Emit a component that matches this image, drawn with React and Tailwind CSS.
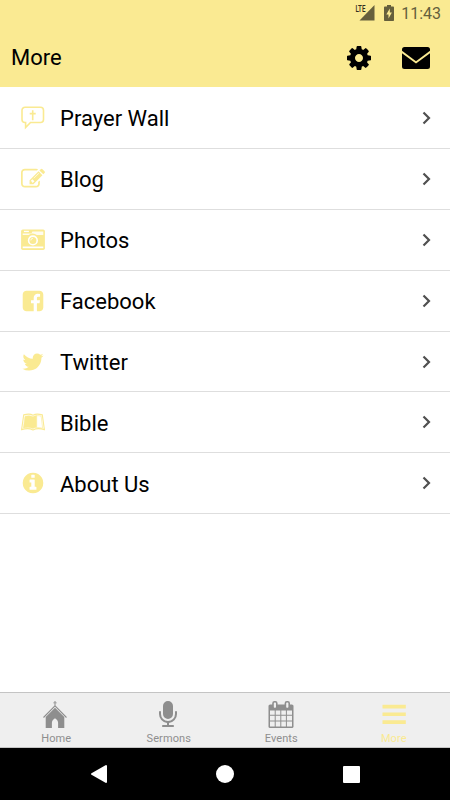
import React from "react";

const PATHS = {
  blog: "M888 1184l116-116-152-152-116 116v56h96v96h56zm440-720q-16-16-33 1l-350 350q-17 17-1 33t33-1l350-350q17-17 1-33zm80 594v190q0 119-84.5 203.5t-203.5 84.5h-832q-119 0-203.5-84.5t-84.5-203.5v-832q0-119 84.5-203.5t203.5-84.5h832q63 0 117 25 15 7 18 23 3 17-9 29l-49 49q-14 14-32 8-23-6-45-6h-832q-66 0-113 47t-47 113v832q0 66 47 113t113 47h832q66 0 113-47t47-113v-126q0-13 9-22l64-64q15-15 35-7t20 29zm-96-738l288 288-672 672h-288v-288zm444 132l-92 92-288-288 92-92q28-28 68-28t68 28l152 152q28 28 28 68t-28 68z",
  facebook:
    "M1376 128q119 0 203.5 84.5t84.5 203.5v960q0 119-84.5 203.5t-203.5 84.5h-188v-595h199l30-232h-229v-148q0-56 23.5-84t91.5-28l122-1v-207q-63-9-178-9-136 0-217.5 80t-81.5 226v171h-200v232h200v595h-532q-119 0-203.5-84.5t-84.5-203.5v-960q0-119 84.5-203.5t203.5-84.5h960z",
  twitter:
    "M1684 408q-67 98-162 167 1 14 1 42 0 130-38 259.5t-115.5 248.5-184.5 210.5-258 146-323 54.5q-271 0-496-145 35 4 78 4 225 0 401-138-105-2-188-64.5t-114-159.5q33 5 61 5 43 0 85-11-112-23-185.5-111.5t-73.5-205.5v-4q68 38 146 41-66-44-105-115t-39-154q0-88 44-163 121 149 294.5 238.5t371.5 99.5q-8-38-8-74 0-134 94.5-228.5t228.5-94.5q140 0 236 102 109-21 205-78-37 115-142 178 93-10 186-50z",
  about:
    "M1152 1376v-160q0-14-9-23t-23-9h-96v-512q0-14-9-23t-23-9h-320q-14 0-23 9t-9 23v160q0 14 9 23t23 9h96v320h-96q-14 0-23 9t-9 23v160q0 14 9 23t23 9h448q14 0 23-9t9-23zm-128-896v-160q0-14-9-23t-23-9h-192q-14 0-23 9t-9 23v160q0 14 9 23t23 9h192q14 0 23-9t9-23zm640 416q0 209-103 385.5t-279.5 279.5-385.5 103-385.5-103-279.5-279.5-103-385.5 103-385.5 279.5-279.5 385.5-103 385.5 103 279.5 279.5 103 385.5z",
  cog: "M1152 896q0-106-75-181t-181-75-181 75-75 181 75 181 181 75 181-75 75-181zm512-109v222q0 12-8 23t-20 13l-185 28q-19 54-39 91 35 50 107 138 10 12 10 25t-9 23q-27 37-99 108t-94 71q-12 0-26-9l-138-108q-44 23-91 38-16 136-29 186-7 28-36 28h-222q-14 0-24.5-8.5t-11.5-21.5l-28-184q-49-16-90-37l-141 107q-10 9-25 9-14 0-25-11-126-114-165-168-7-10-7-23 0-12 8-23 15-21 51-66.5t54-70.5q-27-50-41-99l-183-27q-13-2-21-12.5t-8-23.5v-222q0-12 8-23t19-13l186-28q14-46 39-92-40-57-107-138-10-12-10-24 0-10 9-23 26-36 98.5-107.5t94.5-71.5q13 0 26 10l138 107q44-23 91-38 16-136 29-186 7-28 36-28h222q14 0 24.5 8.5t11.5 21.5l28 184q49 16 90 37l142-107q9-9 24-9 13 0 25 10 129 119 165 170 7 8 7 22 0 12-8 23-15 21-51 66.5t-54 70.5q26 50 41 98l183 28q13 2 21 12.5t8 23.5z",
  mic: "M1472 704v128q0 221-147.5 384.5t-364.5 187.5v132h256q26 0 45 19t19 45-19 45-45 19h-640q-26 0-45-19t-19-45 19-45 45-19h256v-132q-217-24-364.5-187.5t-147.5-384.5v-128q0-26 19-45t45-19 45 19 19 45v128q0 185 131.5 316.5t316.5 131.5 316.5-131.5 131.5-316.5v-128q0-26 19-45t45-19 45 19 19 45zm-256-384v512q0 132-94 226t-226 94-226-94-94-226v-512q0-132 94-226t226-94 226 94 94 226z",
};

function Glyph({ name, className }) {
  return (
    <svg viewBox="0 0 1792 1792" fill="currentColor" className={className}>
      <path d={PATHS[name]} />
    </svg>
  );
}

function PrayerIcon() {
  return (
    <svg
      viewBox="0 0 24 24"
      fill="none"
      stroke="currentColor"
      strokeWidth="1.600"
      className="size-6"
    >
      <path d="M4 1.2h15.500a3 3 0 0 1 3 3v9.300a3 3 0 0 1-3 3H9.5L4.6 21.600v-5.100H4a3 3 0 0 1-3-3V4.2a3 3 0 0 1 3-3z" />
      <path d="M11.700 4.2v10M8.700 7.6h6" />
    </svg>
  );
}

function CameraIcon() {
  return (
    <svg viewBox="0 0.5 24 24" className="size-6" fill="#fff">
      <rect x=".1" y="2" width="23.800" height="20.400" rx="1.700" fill="currentColor" />
      <path d="M2.900 3.300h5v1.300h-5z" />
      <path d="M1.700 6h8.700l1-2h10.900v3.500h-6.500a6.200 6.200 0 0 0-8.200 0H1.700z" opacity=".85" />
      <path d="M1.700 19h20.600v1.700H1.700z" />
      <circle cx="11.900" cy="12.900" r="4.300" fill="none" stroke="#fff" strokeWidth="1.600" />
      <path d="M9.800 12.900a2.100 2.100 0 0 1 2.100-2.100" fill="none" stroke="#fff" strokeWidth=".8" />
    </svg>
  );
}

function BibleIcon() {
  return (
    <svg viewBox="0 0 24 24" fill="none" stroke="currentColor" className="size-6">
      <path
        d="M2.700 4.900C6 3.900 9.600 3.800 12 5.200c2.400-1.400 6-1.300 9.300-.3l2.100 14.700c-4.300-1.300-8-1.400-11.400.3-3.400-1.700-7.100-1.600-11.400-.3z"
        strokeWidth="1.100"
      />
      <path
        d="M4 6.300C7 5.400 9.700 5.500 12 6.800c1.300-.8 2.400-1.100 3.700-1.200v11.900c-1.300.1-2.500.4-3.700 1-3-1.100-6.200-1.100-9.600-.4z"
        fill="currentColor"
        strokeWidth=".5"
      />
      <path d="M15.700 5.600c1.600-.1 3 .2 4.500.6l1.400 12c-2-.5-3.900-.7-5.900-.6" strokeWidth=".6" />
    </svg>
  );
}

function ChurchIcon() {
  return (
    <svg viewBox="0 0 26 28" className="mr-0.5 h-7 w-[26px]" fill="currentColor">
      <path d="M12.500 0h1v1.400h1.200v.9h-1.200v2.200h-1V2.300h-1.200v-.9h1.200z" />
      <path
        d="M1.500 16.500L13 4.900l11.500 11.600"
        fill="none"
        stroke="currentColor"
        strokeWidth="1.100"
      />
      <path d="M13 6.800l9.300 9.300V27h-6.200v-5.200c0-1.800-1.200-3.300-3.100-4.600-1.900 1.300-3.100 2.800-3.100 4.600V27H3.700V16.100z" />
    </svg>
  );
}

function CalendarIcon() {
  return (
    <svg viewBox="0 0 26 28" className="h-7 w-[26px]">
      <rect x=".5" y="3.500" width="25" height="23.500" rx="1.600" fill="currentColor" />
      <path
        fill="#efefef"
        d="M2 9.500h4.700v4.200H2zM7.700 9.500h4.600v4.200H7.700zM13.300 9.500h4.600v4.200h-4.600zM18.900 9.500H24v4.200h-5.100zM2 14.800h4.700v4.600H2zM7.700 14.800h4.600v4.600H7.700zM13.300 14.800h4.600v4.600h-4.600zM18.900 14.800H24v4.600h-5.100zM2 20.500h4.700v5H2zM7.700 20.500h4.600v5H7.700zM13.300 20.500h4.600v5h-4.600zM18.900 20.500H24v5h-5.100z"
      />
      <rect x="5" y=".8" width="3.800" height="6.800" rx="1.500" fill="#efefef" stroke="currentColor" strokeWidth="1.600" />
      <rect x="17.400" y=".8" width="3.800" height="6.800" rx="1.500" fill="#efefef" stroke="currentColor" strokeWidth="1.600" />
    </svg>
  );
}

const items = [
  { label: "Prayer Wall", icon: <PrayerIcon /> },
  { label: "Blog", icon: <Glyph name="blog" className="size-6" /> },
  { label: "Photos", icon: <CameraIcon /> },
  { label: "Facebook", icon: <Glyph name="facebook" className="size-6" /> },
  { label: "Twitter", icon: <Glyph name="twitter" className="size-6" /> },
  { label: "Bible", icon: <BibleIcon /> },
  { label: "About Us", icon: <Glyph name="about" className="size-6" /> },
];

function StatusBar() {
  return (
    <div className="flex h-7 items-start justify-end pr-[9px] text-[#655f3c]">
      <svg viewBox="0 0 20 22" className="h-[22px] w-5">
        <path d="M19.500 5v15.500H4.500z" fill="currentColor" />
        <text
          x="0.500"
          y="12"
          fontSize="8.500"
          fontWeight="500"
          textLength="10"
          lengthAdjust="spacingAndGlyphs"
          fill="#302d1c"
          fontFamily="Roboto, sans-serif"
        >
          LTE
        </text>
      </svg>
      <svg viewBox="0 0 10 16" className="mt-[5px] ml-[9px] h-4 w-2.5" fill="currentColor">
        <path d="M3 0h4v1.600h2.200q.8 0 .8.800v12.800q0 .8-.8.800H.8q-.8 0-.8-.8V2.400q0-.8.800-.8H3z" />
        <path d="M5.800 3.500L2.300 9.500h2.200v4L7.900 7.600H5.800z" fill="#faea92" />
      </svg>
      <span className="mt-1 ml-[7px] text-base leading-5">11:43</span>
    </div>
  );
}

function Header() {
  return (
    <div className="flex h-[59px] items-center pr-5 pl-[11px]">
      <h1 className="flex-1 text-[22px]">More</h1>
      <Glyph name="cog" className="size-7" />
      <svg viewBox="0 0 28 22" className="ml-[29px] h-[22px] w-7" fill="currentColor">
        <path d="M2.500 0h23Q28 0 28 2.500v1.300L14 14.200 0 3.800V2.500Q0 0 2.500 0z" />
        <path d="M0 6.200l14 10.200L28 6.200v13.300q0 2.500-2.500 2.500h-23Q0 22 0 19.500z" />
      </svg>
    </div>
  );
}

function Tab({ label, active, children }) {
  return (
    <div
      className={`flex flex-1 flex-col items-center pt-2 ${
        active ? "text-[#faea92]" : "text-[#8e8e8e]"
      }`}
    >
      <div className="flex h-[30px] justify-center">{children}</div>
      <span className="text-[11px] leading-4 tracking-[0.1px]">{label}</span>
    </div>
  );
}

function App() {
  return (
    <div className="flex h-[800px] w-[450px] flex-col overflow-hidden bg-white font-[Roboto,sans-serif] text-black">
      <header className="bg-[#faea92]">
        <StatusBar />
        <Header />
      </header>

      <ul className="flex-1 pt-px">
        {items.map((item) => (
          <li
            key={item.label}
            className="flex h-[60.900px] items-center border-b border-[#dedede] pr-[19px] pl-[21px]"
          >
            <span className="text-[#faea92]">{item.icon}</span>
            <span className="ml-[15px] flex-1 pt-0.5 text-[22px]">{item.label}</span>
            <svg viewBox="0 0 9 14" className="h-3.5 w-[9px]" fill="none">
              <path d="M1.500 1.500L7 7l-5.500 5.500" stroke="#505050" strokeWidth="2.200" />
            </svg>
          </li>
        ))}
      </ul>

      <nav className="flex h-14 border-t border-b border-[#c4c4c4] bg-[#efefef]">
        <Tab label="Home">
          <ChurchIcon />
        </Tab>
        <Tab label="Sermons">
          <Glyph name="mic" className="mr-0.5 size-7" />
        </Tab>
        <Tab label="Events">
          <CalendarIcon />
        </Tab>
        <Tab label="More" active>
          <svg viewBox="0 0 24 28" className="h-7 w-6" fill="currentColor">
            <path d="M.5 3.700h23.300v3.700H.5zM.5 11.400h23.300v3.700H.5zM.5 19.200h23.300v3.700H.5z" />
          </svg>
        </Tab>
      </nav>

      <div className="flex h-[52px] items-center justify-between bg-black pr-[90px] pl-[89px]">
        <svg viewBox="0 0 18 20" className="h-5 w-[18px]" fill="#fff" stroke="#fff" strokeLinejoin="round">
          <path d="M3 10L17 2v16z" strokeWidth="2" />
        </svg>
        <span className="size-[18px] rounded-full bg-white" />
        <span className="size-[17px] rounded-[1px] bg-white" />
      </div>
    </div>
  );
}

export default App;
